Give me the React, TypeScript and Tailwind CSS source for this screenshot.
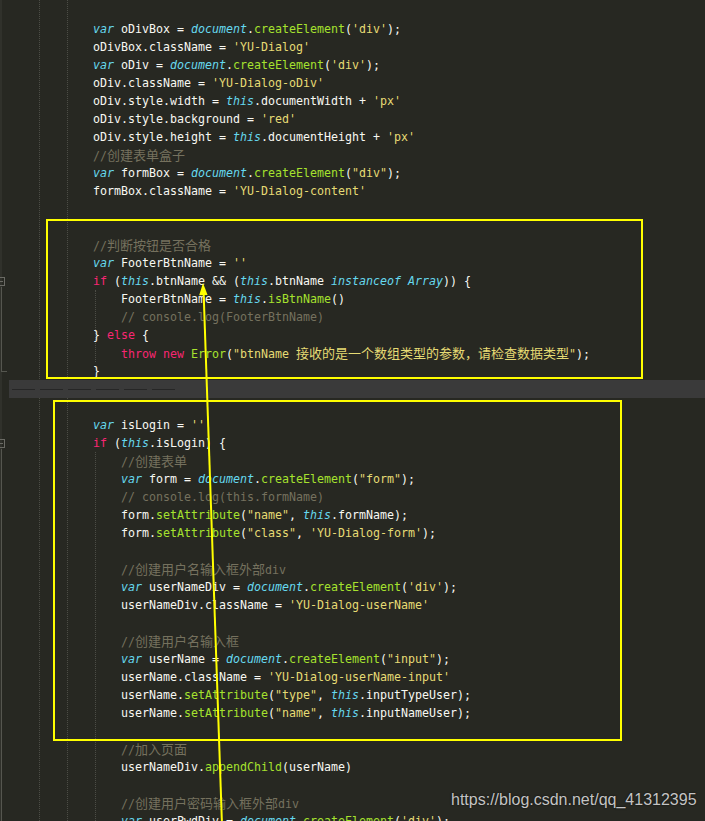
import React from "react";

const C = {
  p: "text-[#f8f8f2]",
  k: "text-[#f92672]",
  c: "text-[#66d9ef] italic",
  g: "text-[#a6e22e]",
  s: "text-[#e6db74]",
  m: "text-[#75715e]",
};

type K = keyof typeof C;
type Tok = [K, string];
type Line = { i: number; t: Tok[]; band?: boolean };

const ce = (name: string, arg: string): Tok[] => [
  ["c", "var"],
  ["p", ` ${name} = `],
  ["c", "document"],
  ["p", "."],
  ["g", "createElement"],
  ["p", "("],
  ["s", arg],
  ["p", ");"],
];

const E: Line = { i: 0, t: [] };

const LINES: Line[] = [
  { i: 0, t: ce("oDivBox", "'div'") },
  { i: 0, t: [["p", "oDivBox.className = "], ["s", "'YU-Dialog'"]] },
  { i: 0, t: ce("oDiv", "'div'") },
  { i: 0, t: [["p", "oDiv.className = "], ["s", "'YU-Dialog-oDiv'"]] },
  { i: 0, t: [["p", "oDiv.style.width = "], ["c", "this"], ["p", ".documentWidth + "], ["s", "'px'"]] },
  { i: 0, t: [["p", "oDiv.style.background = "], ["s", "'red'"]] },
  { i: 0, t: [["p", "oDiv.style.height = "], ["c", "this"], ["p", ".documentHeight + "], ["s", "'px'"]] },
  { i: 0, t: [["m", "//创建表单盒子"]] },
  { i: 0, t: ce("formBox", '"div"') },
  { i: 0, t: [["p", "formBox.className = "], ["s", "'YU-Dialog-content'"]] },
  E,
  E,
  { i: 0, t: [["m", "//判断按钮是否合格"]] },
  { i: 0, t: [["c", "var"], ["p", " FooterBtnName = "], ["s", "''"]] },
  {
    i: 0,
    t: [
      ["k", "if"],
      ["p", " ("],
      ["c", "this"],
      ["p", ".btnName && ("],
      ["c", "this"],
      ["p", ".btnName "],
      ["c", "instanceof"],
      ["p", " "],
      ["c", "Array"],
      ["p", ")) {"],
    ],
  },
  { i: 1, t: [["p", "FooterBtnName = "], ["c", "this"], ["p", "."], ["g", "isBtnName"], ["p", "()"]] },
  { i: 1, t: [["m", "// console.log(FooterBtnName)"]] },
  { i: 0, t: [["p", "} "], ["k", "else"], ["p", " {"]] },
  {
    i: 1,
    t: [
      ["k", "throw"],
      ["p", " "],
      ["k", "new"],
      ["p", " "],
      ["g", "Error"],
      ["p", "("],
      ["s", '"btnName 接收的是一个数组类型的参数，请检查数据类型"'],
      ["p", ");"],
    ],
  },
  { i: 0, t: [["p", "}"]] },
  { i: 0, t: [], band: true },
  E,
  { i: 0, t: [["c", "var"], ["p", " isLogin = "], ["s", "''"]] },
  { i: 0, t: [["k", "if"], ["p", " ("], ["c", "this"], ["p", ".isLogin) {"]] },
  { i: 1, t: [["m", "//创建表单"]] },
  { i: 1, t: ce("form", '"form"') },
  { i: 1, t: [["m", "// console.log(this.formName)"]] },
  { i: 1, t: [["p", "form."], ["g", "setAttribute"], ["p", "("], ["s", '"name"'], ["p", ", "], ["c", "this"], ["p", ".formName);"]] },
  { i: 1, t: [["p", "form."], ["g", "setAttribute"], ["p", "("], ["s", '"class"'], ["p", ", "], ["s", "'YU-Dialog-form'"], ["p", ");"]] },
  E,
  { i: 1, t: [["m", "//创建用户名输入框外部div"]] },
  { i: 1, t: ce("userNameDiv", "'div'") },
  { i: 1, t: [["p", "userNameDiv.className = "], ["s", "'YU-Dialog-userName'"]] },
  E,
  { i: 1, t: [["m", "//创建用户名输入框"]] },
  { i: 1, t: ce("userName", '"input"') },
  { i: 1, t: [["p", "userName.className = "], ["s", "'YU-Dialog-userName-input'"]] },
  { i: 1, t: [["p", "userName."], ["g", "setAttribute"], ["p", "("], ["s", '"type"'], ["p", ", "], ["c", "this"], ["p", ".inputTypeUser);"]] },
  { i: 1, t: [["p", "userName."], ["g", "setAttribute"], ["p", "("], ["s", '"name"'], ["p", ", "], ["c", "this"], ["p", ".inputNameUser);"]] },
  E,
  { i: 1, t: [["m", "//加入页面"]] },
  { i: 1, t: [["p", "userNameDiv."], ["g", "appendChild"], ["p", "(userName)"]] },
  E,
  { i: 1, t: [["m", "//创建用户密码输入框外部div"]] },
  { i: 1, t: ce("userPwdDiv", "'div'") },
];

const CJK = /([\u3000-\u9fff\uff00-\uffef]+)/;

function Text({ text }: { text: string }) {
  const parts = text.split(CJK);
  return (
    <>
      {parts.map((part, idx) =>
        idx % 2 === 1 ? (
          <span key={idx} className="font-['Noto_Sans_CJK_SC',sans-serif] text-[13px] not-italic">
            {part}
          </span>
        ) : (
          <React.Fragment key={idx}>{part}</React.Fragment>
        )
      )}
    </>
  );
}

function Band() {
  return (
    <div className="h-[18px] ml-[9px] bg-[#3a3a3a] flex items-center pl-[3px] gap-[5px]">
      {[0, 1, 2, 3, 4, 5].map((n) => (
        <div key={n} className="w-[23px] h-[1px] bg-[#262626]" />
      ))}
    </div>
  );
}

function Row({ line }: { line: Line }) {
  if (line.band) return <Band />;
  return (
    <div className={"h-[18px] leading-[18px] whitespace-pre " + (line.i ? "pl-[121px]" : "pl-[93px]")}>
      {line.t.map(([k, s], idx) => (
        <span key={idx} className={C[k]}>
          <Text text={s} />
        </span>
      ))}
    </div>
  );
}

function Guide({ x, top, h }: { x: "a" | "b" | "c"; top: number; h: number }) {
  const cls =
    x === "a" ? "left-[39px]" : x === "b" ? "left-[67px]" : "left-[95px]";
  return (
    <div
      className={"absolute w-0 border-l border-dotted border-[#4c4d46] " + cls}
      style={{ top, height: h }}
    />
  );
}

export default function App() {
  return (
    <div className="relative w-[705px] h-[821px] overflow-hidden bg-[#272822] font-['DejaVu_Sans_Mono',monospace] text-[11.63px]">
      {/* gutter stripe */}
      <div className="absolute left-0 top-0 w-[2px] h-full bg-[#30312b]" />
      {/* indent guides */}
      <Guide x="a" top={0} h={821} />
      <Guide x="b" top={0} h={821} />
      <Guide x="c" top={290} h={72} />
      <Guide x="c" top={452} h={369} />
      {/* fold markers */}
      <div className="absolute left-[-4px] top-[277px] w-[9px] h-[9px] border border-[#6a6a64] flex items-center justify-center">
        <div className="w-[5px] h-[1px] bg-[#6a6a64]" />
      </div>
      <div className="absolute left-[1px] top-[287px] w-[6px] h-[85px] border-l border-b border-[#55564f]" />
      <div className="absolute left-[-4px] top-[439px] w-[9px] h-[9px] border border-[#6a6a64] flex items-center justify-center">
        <div className="w-[5px] h-[1px] bg-[#6a6a64]" />
      </div>
      <div className="absolute left-[1px] top-[449px] w-0 h-[372px] border-l border-[#55564f]" />

      <div className="relative pt-[20px]">
        {LINES.map((l, idx) => (
          <Row key={idx} line={l} />
        ))}
      </div>

      {/* yellow annotation boxes */}
      <div className="absolute left-[46px] top-[219px] w-[597px] h-[160px] border-2 border-[#ffff00]" />
      <div className="absolute left-[53px] top-[400px] w-[569px] h-[341px] border-2 border-[#ffff00]" />

      {/* arrow */}
      <svg className="absolute left-0 top-0" width="705" height="821" viewBox="0 0 705 821">
        <line x1="203.6" y1="292" x2="222" y2="825" stroke="#ffff00" strokeWidth="2" />
        <polygon points="203,283 199.2,295.2 207.6,294.9" fill="#ffff00" />
      </svg>

      {/* watermark */}
      <div className="absolute left-[451px] top-[791px] font-['Liberation_Sans',Arial,sans-serif] text-[16px] leading-[18px] text-[#c4c4c4] [text-shadow:0_0_2px_rgba(0,0,0,0.8)] whitespace-nowrap not-italic">
        https://blog.csdn.net/qq_41312395
      </div>
    </div>
  );
}
